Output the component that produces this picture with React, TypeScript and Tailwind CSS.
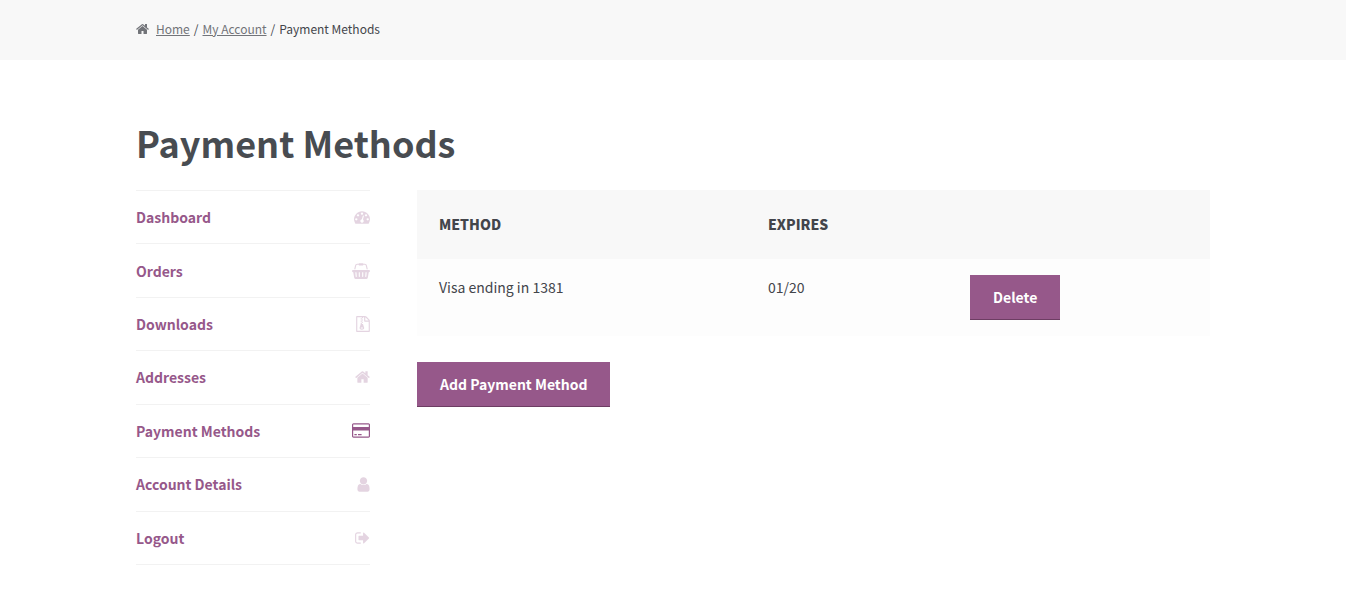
type IconName = 'dashboard' | 'basket' | 'archive' | 'home' | 'card' | 'user' | 'signOut';

const icons: Record<IconName, { box: string; size: string; path: string }> = {
  dashboard: {
    box: '0 0 1792 1792',
    size: 'h-4 w-4',
    path: 'M384 1152q0-53-37.5-90.5t-90.5-37.5-90.5 37.5-37.5 90.5 37.5 90.5 90.5 37.5 90.5-37.5 37.5-90.5zm192-448q0-53-37.5-90.5t-90.5-37.5-90.5 37.5-37.5 90.5 37.5 90.5 90.5 37.5 90.5-37.5 37.5-90.5zm428 481l101-382q6-26-7.5-48.5t-38.5-29.5-48 6.5-30 39.5l-101 382q-60 5-107 43.5t-63 98.5q-20 77 20 146t117 89 146-20 89-117q16-60-6-117t-72-91zm660-33q0-53-37.5-90.5t-90.5-37.5-90.5 37.5-37.5 90.5 37.5 90.5 90.5 37.5 90.5-37.5 37.5-90.5zm-640-640q0-53-37.5-90.5t-90.5-37.5-90.5 37.5-37.5 90.5 37.5 90.5 90.5 37.5 90.5-37.5 37.5-90.5zm448 192q0-53-37.5-90.5t-90.5-37.5-90.5 37.5-37.5 90.5 37.5 90.5 90.5 37.5 90.5-37.5 37.5-90.5zm320 448q0 261-141 483-19 29-54 29h-1402q-35 0-54-29-141-221-141-483 0-182 71-348t191-286 286-191 348-71 348 71 286 191 191 286 71 348z',
  },
  basket: {
    box: '0 0 2048 1792',
    size: 'h-4 w-[18px]',
    path: 'M1920 768q53 0 90.5 37.5t37.5 90.5-37.5 90.5-90.5 37.5h-15l-115 662q-8 46-44 76t-82 30h-1280q-46 0-82-30t-44-76l-115-662h-15q-53 0-90.5-37.5t-37.5-90.5 37.5-90.5 90.5-37.5h1792zm-1435 800q26-2 43.5-22.5t15.5-46.5l-32-416q-2-26-22.5-43.5t-46.5-15.5-43.5 22.5-15.5 46.5l32 416q2 25 20.5 42t43.5 17h5zm411-64v-416q0-26-19-45t-45-19-45 19-19 45v416q0 26 19 45t45 19 45-19 19-45zm384 0v-416q0-26-19-45t-45-19-45 19-19 45v416q0 26 19 45t45 19 45-19 19-45zm352 5l32-416q2-26-15.5-46.5t-43.5-22.5-46.5 15.5-22.5 43.5l-32 416q-2 26 15.5 46.5t43.5 22.5h5q25 0 43.5-17t20.5-42zm-1156-1217l-93 412h-132l101-441q19-88 89-143.5t160-55.5h167q0-26 19-45t45-19h384q26 0 45 19t19 45h167q90 0 160 55.5t89 143.5l101 441h-132l-93-412q-11-44-45.5-72t-79.5-28h-167q0 26-19 45t-45 19h-384q-26 0-45-19t-19-45h-167q-45 0-79.5 28t-45.5 72z',
  },
  archive: {
    box: '128 0 1536 1792',
    size: 'h-4 w-[14px]',
    path: 'M768 384v-128h-128v128h128zm128 128v-128h-128v128h128zm-128 128v-128h-128v128h128zm128 128v-128h-128v128h128zm700-388q28 28 48 76t20 88v1152q0 40-28 68t-68 28h-1344q-40 0-68-28t-28-68v-1600q0-40 28-68t68-28h896q40 0 88 20t76 48zm-444-244v376h376q-10-29-22-41l-313-313q-12-12-41-22zm384 1528v-1024h-416q-40 0-68-28t-28-68v-416h-128v128h-128v-128h-512v1536h1280zm-627-721l107 349q8 27 8 52 0 83-72.5 137.5t-183.5 54.5-183.5-54.5-72.5-137.5q0-25 8-52 21-63 120-396v-128h128v128h79q22 0 39 13t23 34zm-141 465q53 0 90.5-19t37.5-45-37.5-45-90.5-19-90.5 19-37.5 45 37.5 45 90.5 19z',
  },
  home: {
    box: '64 0 1664 1792',
    size: 'h-4 w-[15px]',
    path: 'M1472 992v480q0 26-19 45t-45 19h-384v-384h-256v384h-384q-26 0-45-19t-19-45v-480q0-1 .5-3t.5-3l575-474 575 474q1 2 1 6zm223-69l-62 74q-8 9-21 11h-3q-13 0-21-7l-692-577-692 577q-12 8-24 7-13-2-21-11l-62-74q-8-10-7-23.5t11-21.5l719-599q32-26 76-26t76 26l244 204v-195q0-14 9-23t23-9h192q14 0 23 9t9 23v408l219 182q10 8 11 21.5t-7 23.5z',
  },
  card: {
    box: '0 0 1920 1792',
    size: 'h-[17px] w-[18px]',
    path: 'M1760 128q66 0 113 47t47 113v1216q0 66-47 113t-113 47h-1600q-66 0-113-47t-47-113v-1216q0-66 47-113t113-47h1600zm-1600 128q-13 0-22.5 9.5t-9.5 22.5v224h1664v-224q0-13-9.5-22.5t-22.5-9.5h-1600zm1600 1280q13 0 22.5-9.5t9.5-22.5v-608h-1664v608q0 13 9.5 22.5t22.5 9.5h1600zm-1504-128v-128h256v128h-256zm384 0v-128h384v128h-384z',
  },
  user: {
    box: '256 0 1280 1792',
    size: 'h-[17px] w-[13px]',
    path: 'M1536 1399q0 109-62.5 187t-150.5 78h-854q-88 0-150.5-78t-62.5-187q0-85 8.5-160.5t31.5-152 58.5-131 94-89 134.5-34.5q131 128 313 128t313-128q76 0 134.5 34.5t94 89 58.5 131 31.5 152 8.5 160.5zm-256-887q0 159-112.5 271.5t-271.5 112.5-271.5-112.5-112.5-271.5 112.5-271.5 271.5-112.5 271.5 112.5 112.5 271.5z',
  },
  signOut: {
    box: '64 0 1664 1792',
    size: 'h-4 w-[15px]',
    path: 'M704 1440q0 4 1 20t.5 26.5-3 23.5-10 19.5-20.5 6.5h-320q-119 0-203.5-84.5t-84.5-203.5v-704q0-119 84.5-203.5t203.5-84.5h320q13 0 22.5 9.5t9.5 22.5q0 4 1 20t.5 26.5-3 23.5-10 19.5-20.5 6.5h-320q-66 0-113 47t-47 113v704q0 66 47 113t113 47h312l11.5 1 11.5 3 8 5.5 7 9 2 13.5zm928-544q0 26-19 45l-544 544q-19 19-45 19t-45-19-19-45v-288h-448q-26 0-45-19t-19-45v-384q0-26 19-45t45-19h448v-288q0-26 19-45t45-19 45 19l544 544q19 19 19 45z',
  },
};

function Icon({ name, className }: { name: IconName; className?: string }) {
  const { box, size, path } = icons[name];
  return (
    <svg viewBox={box} className={className ?? size} fill="currentColor" aria-hidden="true">
      <path d={path} />
    </svg>
  );
}

const links: { label: string; icon: IconName }[] = [
  { label: 'Dashboard', icon: 'dashboard' },
  { label: 'Orders', icon: 'basket' },
  { label: 'Downloads', icon: 'archive' },
  { label: 'Addresses', icon: 'home' },
  { label: 'Payment Methods', icon: 'card' },
  { label: 'Account Details', icon: 'user' },
  { label: 'Logout', icon: 'signOut' },
];

const buttonClass =
  'block border-b border-[#6d3d63] bg-[#96588a] px-[23px] py-[10px] text-sm leading-6 font-bold text-white';

export default function App() {
  return (
    <div className="min-h-screen bg-white font-['Noto_Sans_CJK_SC',sans-serif] text-[#43454b]">
      <div className="bg-[#f8f8f8]">
        <nav aria-label="Breadcrumb" className="mx-auto flex max-w-[1074px] items-center pt-[19px] pb-[21px] text-xs leading-5 text-[#43454b]">
          <a href="#home" className="flex items-center gap-[7px] text-[#727479]">
            <Icon name="home" className="h-[14px] w-[13px]" />
            <span className="underline">Home</span>
          </a>
          <span className="px-1">/</span>
          <a href="#account" className="text-[#727479] underline">My Account</a>
          <span className="px-1">/</span>
          <span>Payment Methods</span>
        </nav>
      </div>

      <div className="mx-auto max-w-[1074px] pt-[58px]">
        <h1 className="pb-[23px] text-4xl leading-[49px] font-bold text-[#484c51]">Payment Methods</h1>
        <div className="flex items-start gap-[47px]">
          <nav aria-label="Account" className="w-[234px] shrink-0">
            <ul className="grid min-h-[375px] auto-rows-fr border-t border-[#f2f2f2]">
              {links.map(({ label, icon }) => (
                <li key={label} className="border-b border-[#f2f2f2]">
                  <a
                    href="#account"
                    className="flex h-full items-center justify-between text-sm leading-6 font-bold text-[#96588a]"
                  >
                    {label}
                    <span className={icon === 'card' ? '' : 'opacity-25'}>
                      <Icon name={icon} />
                    </span>
                  </a>
                </li>
              ))}
            </ul>
          </nav>

          <main className="min-w-0 flex-1">
            <table className="w-full table-fixed text-left text-sm leading-6">
              <thead className="bg-[#f8f8f8]">
                <tr>
                  <th className="w-[329px] px-[22px] pt-[22px] pb-[23px] font-black">METHOD</th>
                  <th className="w-[202px] px-[22px] pt-[22px] pb-[23px] font-black">EXPIRES</th>
                  <th aria-label="Actions" />
                </tr>
              </thead>
              <tbody className="bg-[#fdfdfd]">
                <tr className="align-top">
                  <td className="px-[22px] py-4">Visa ending in 1381</td>
                  <td className="px-[22px] py-4">01/20</td>
                  <td className="px-[22px] py-4">
                    <button type="button" className={buttonClass}>Delete</button>
                  </td>
                </tr>
              </tbody>
            </table>
            <div className="mt-[26px] flex">
              <button type="button" className={buttonClass}>Add Payment Method</button>
            </div>
          </main>
        </div>
      </div>
    </div>
  );
}
